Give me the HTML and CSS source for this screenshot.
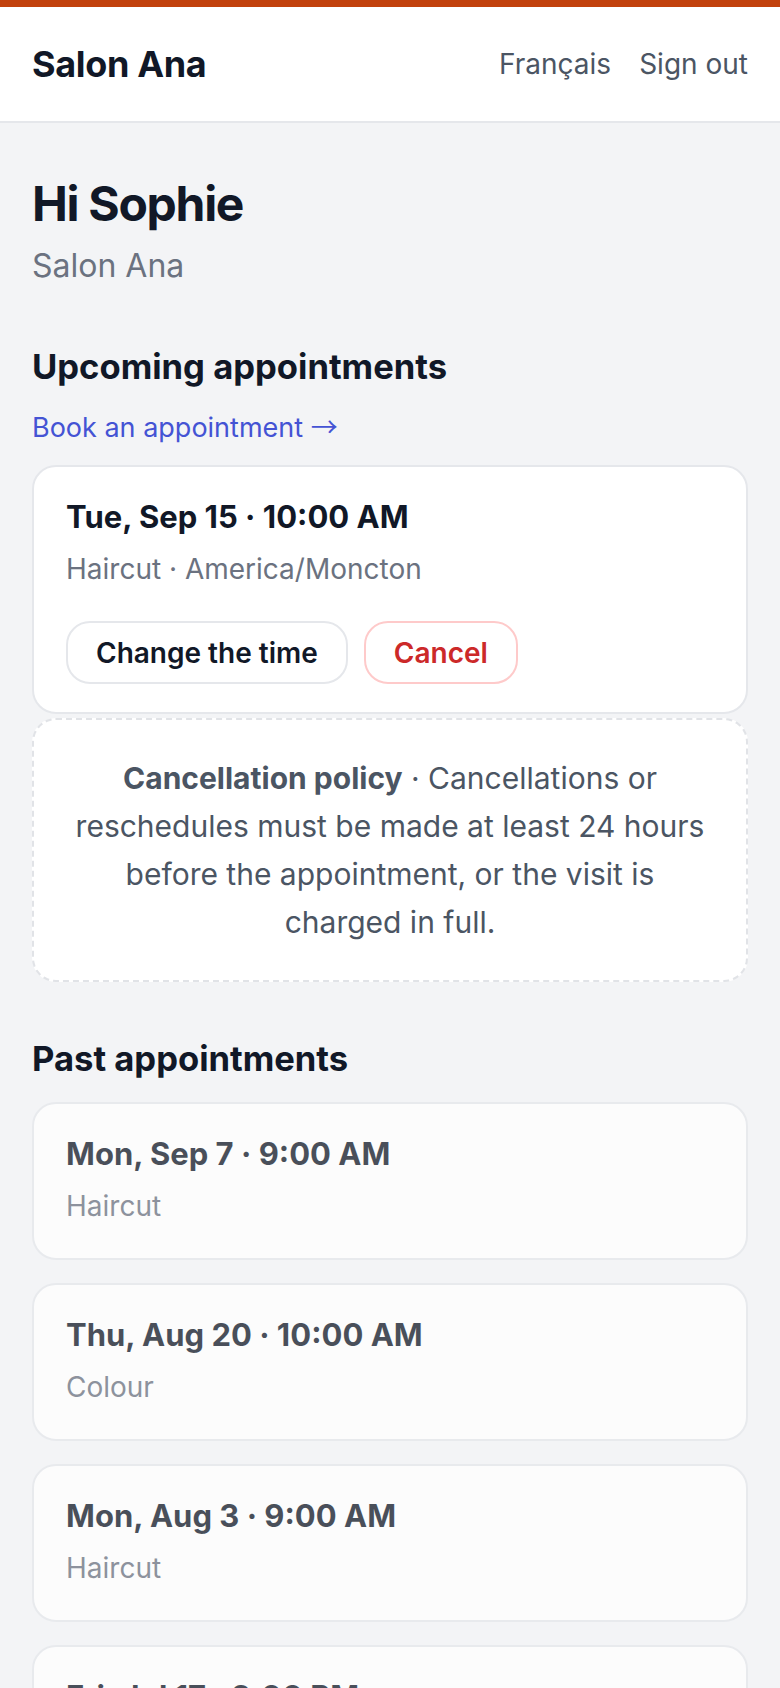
FILE: index.html
```html
<!DOCTYPE html>
<html lang="en">
<head>
<meta charset="utf-8">
<title>Salon Ana</title>
<link rel="stylesheet" href="styles.css">
</head>
<body>
<div class="topbar"></div>
<header class="site-header">
  <div class="brand">Salon Ana</div>
  <nav class="nav">
    <a href="#" class="nav-link">Français</a>
    <a href="#" class="nav-link">Sign out</a>
  </nav>
</header>
<main class="main">
  <h1 class="greeting">Hi Sophie</h1>
  <p class="salon">Salon Ana</p>

  <section class="section">
    <h2 class="section-title">Upcoming appointments</h2>
    <a href="#" class="book-link">Book an appointment <span class="arrow">→</span></a>
    <div class="card upcoming">
      <div class="card-title">Tue, Sep 15 · 10:00 AM</div>
      <div class="card-sub">Haircut · America/Moncton</div>
      <div class="actions">
        <button class="btn">Change the time</button>
        <button class="btn btn-danger">Cancel</button>
      </div>
    </div>
    <div class="policy">
      <strong>Cancellation policy</strong> · Cancellations or reschedules must be made at least 24 hours before the appointment, or the visit is <span class="nowrap">charged in full.</span>
    </div>
  </section>

  <section class="section">
    <h2 class="section-title">Past appointments</h2>
    <div class="past-list">
      <div class="card past">
        <div class="card-title">Mon, Sep 7 · 9:00 AM</div>
        <div class="card-sub">Haircut</div>
      </div>
      <div class="card past">
        <div class="card-title">Thu, Aug 20 · 10:00 AM</div>
        <div class="card-sub">Colour</div>
      </div>
      <div class="card past">
        <div class="card-title">Mon, Aug 3 · 9:00 AM</div>
        <div class="card-sub">Haircut</div>
      </div>
      <div class="card past">
        <div class="card-title">Fri, Jul 17 · 2:00 PM</div>
        <div class="card-sub">Haircut</div>
      </div>
    </div>
  </section>
</main>
</body>
</html>
```
FILE: styles.css
```css
* { box-sizing: border-box; }
html, body { margin: 0; padding: 0; }
body {
  background: #f3f4f6;
  font-family: Inter, "Noto Sans", "Liberation Sans", sans-serif;
  color: #111827;
}
.topbar { height: 7px; background: #c2410c; }
.site-header {
  background: #ffffff;
  height: 116px;
  border-bottom: 2px solid #e5e7eb;
  padding: 0 32px;
  display: flex;
  align-items: center;
  justify-content: space-between;
}
.brand { font-size: 36px; font-weight: 700; color: #111827; line-height: 56px; letter-spacing: -0.35px; }
.nav { display: flex; gap: 28px; }
.nav-link { font-size: 28px; color: #4b5563; text-decoration: none; line-height: 40px; }

.main { padding: 49px 32px 40px; }
.greeting { margin: 0; font-size: 48px; line-height: 64px; font-weight: 700; color: #111827; letter-spacing: -1.3px; }
.salon { margin: 6px 0 0; font-size: 32px; line-height: 48px; color: #6b7280; }

.section { margin-top: 52px; }
.section-title { margin: 0; font-size: 34.6px; line-height: 48px; font-weight: 700; color: #111827; }
.book-link {
  display: block; margin-top: 18px; font-size: 27px; line-height: 40px; height: 40px;
  color: #4453d4; text-decoration: none;
}
.arrow { font-family: "Noto Sans CJK JP", "Noto Sans CJK SC", sans-serif; line-height: 1; }

.card {
  background: #ffffff;
  border: 2px solid #e5e7eb;
  border-radius: 24px;
  padding: 28px 32px;
}
.upcoming { margin-top: 17px; }
.card-title { font-size: 31px; line-height: 44px; font-weight: 700; color: #111827; }
.card-sub { margin-top: 6px; font-size: 28px; line-height: 48px; color: #6b7280; }
.actions { display: flex; gap: 16px; margin-top: 28px; }
.btn {
  height: 63px;
  padding: 0 28px;
  border: 2px solid #e5e7eb;
  border-radius: 24px;
  background: #ffffff;
  font-family: inherit;
  font-size: 28px;
  font-weight: 600;
  color: #111827;
}
.btn-danger { border-color: #fecaca; color: #cc2929; }

.policy {
  margin-top: 4px;
  border: 2px dashed #e1e3e7;
  border-radius: 24px;
  background: #ffffff;
  padding: 34px 32px;
  text-align: center;
  font-size: 30px;
  line-height: 48px;
  color: #4b5563;
}
.policy strong { font-weight: 700; }
.nowrap { white-space: nowrap; }

.past-list { margin-top: 20px; display: flex; flex-direction: column; gap: 23px; }
.past { opacity: 0.75; }
```
